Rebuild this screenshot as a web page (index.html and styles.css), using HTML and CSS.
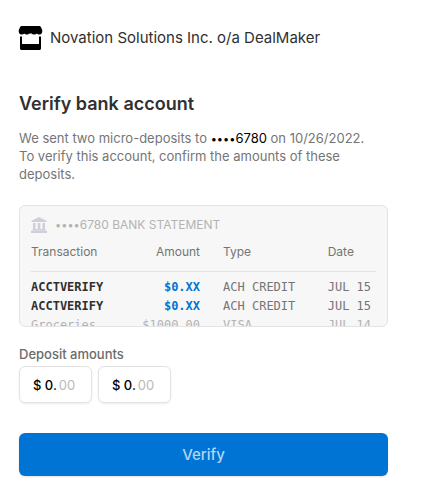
FILE: index.html
```html
<!DOCTYPE html>
<html lang="en">
<head>
  <meta charset="UTF-8">
  <meta name="viewport" content="width=device-width, initial-scale=1.0">
  <title>Verify bank account</title>
  <link rel="stylesheet" href="styles.css">
</head>
<body>

  <!-- Merchant -->
  <header class="merchant">
    <svg class="merchant-icon" viewBox="0 0 24 24" aria-hidden="true">
      <path d="M3 0h17c1 0 1.600.4 2 1.200L23.200 4c.5 2.500-.7 4.600-2.700 4.600-1.200 0-2-.4-2.600-1-.6.6-1.400 1-2.400 1-1.300 0-2.300-.3-2.900-1L11.500 7.400l-1.100.2c-.6.7-1.600 1-2.900 1-1 0-1.800-.4-2.400-1-.6.6-1.400 1-2.600 1C.5 8.600-.7 6.500-.2 4L1 1.200C1.400.4 2 0 3 0z"/>
      <path d="M1 10.500h2V18h17v-7.500h2v12c0 .8-.7 1.500-1.500 1.500h-18C1.700 24 1 23.300 1 22.500z"/>
    </svg>
    <span class="merchant-name">Novation Solutions Inc. o/a DealMaker</span>
  </header>

  <main>
    <h1>Verify bank account</h1>
    <p class="intro">We sent two micro-deposits to <span class="account"><span class="dots">••••</span>6780</span> on 10/26/2022. To verify this account, confirm the amounts of these deposits.</p>

    <!-- Sample statement -->
    <section class="statement">
      <div class="statement-title">
        <svg class="bank-icon" viewBox="0 0 16 16" aria-hidden="true">
          <path d="M8 0l7.500 3.800V5H.5V3.800zM2 6h2.500v6H2zM6.700 6h2.600v6H6.700zM11.500 6H14v6h-2.500zM1.500 12h13v1.500h-13zM0 13.800h16V16H0z"/>
        </svg>
        <span><span class="dots">••••</span>6780 BANK STATEMENT</span>
      </div>
      <table>
        <thead>
          <tr>
            <th class="col-name">Transaction</th>
            <th class="col-amount">Amount</th>
            <th class="col-type">Type</th>
            <th class="col-date">Date</th>
          </tr>
        </thead>
        <tbody>
          <tr>
            <td class="name">ACCTVERIFY</td>
            <td class="amount">$0.XX</td>
            <td>ACH CREDIT</td>
            <td>JUL 15</td>
          </tr>
          <tr>
            <td class="name">ACCTVERIFY</td>
            <td class="amount">$0.XX</td>
            <td>ACH CREDIT</td>
            <td>JUL 15</td>
          </tr>
          <tr class="faded">
            <td>Groceries</td>
            <td>$1000.00</td>
            <td>VISA</td>
            <td>JUL 14</td>
          </tr>
        </tbody>
      </table>
    </section>

    <!-- Deposit form -->
    <form>
      <fieldset>
        <legend>Deposit amounts</legend>
        <div class="amounts">
          <label class="amount-box">
            <span>$ 0.</span>
            <input type="text" inputmode="numeric" maxlength="2" placeholder="00" aria-label="First deposit, cents">
          </label>
          <label class="amount-box">
            <span>$ 0.</span>
            <input type="text" inputmode="numeric" maxlength="2" placeholder="00" aria-label="Second deposit, cents">
          </label>
        </div>
      </fieldset>
      <button type="submit" class="verify">Verify</button>
    </form>
  </main>

</body>
</html>
```

FILE: styles.css
```css
/* Base styling */
* {
  margin: 0;
  padding: 0;
  box-sizing: border-box;
}

body {
  padding: 24px 42px 16px 19px;
  background-color: #fff;
  color: #303030;
  font-family: Inter, 'Liberation Sans', sans-serif;
  font-size: 13px;
  line-height: 18px;
}

/* Merchant */
.merchant {
  display: flex;
  align-items: center;
  gap: 7px;
  height: 28px;
}

.merchant-icon {
  width: 24px;
  height: 24px;
  overflow: visible;
  fill: #000;
}

.merchant-name {
  font-size: 15px;
}

h1 {
  margin-top: 40px;
  font-size: 18px;
  font-weight: 600;
  line-height: 24px;
}

.intro {
  margin-top: 13px;
  padding-right: 14px;
  color: #757575;
}

.account {
  color: #000;
}

.dots {
  font-size: 11px;
  line-height: 1;
}

/* Statement */
.statement {
  height: 122px;
  margin-top: 22px;
  padding: 10px 11px 0;
  overflow: hidden;
  border: 1px solid #e3e3e3;
  border-radius: 6px;
  background-color: #f7f7f7;
}

.statement-title {
  display: flex;
  align-items: center;
  gap: 8px;
  color: #b3b3b3;
  font-size: 12px;
}

.bank-icon {
  width: 16px;
  height: 16px;
  fill: #cfcfd8;
}

table {
  width: 100%;
  table-layout: fixed;
  border-collapse: collapse;
}

th {
  height: 37px;
  border-bottom: 1px solid #e3e3e3;
  color: #757575;
  font-size: 12px;
  font-weight: 400;
  text-align: left;
}

.col-name {
  width: 27%;
}

.col-amount {
  width: 22%;
}

.col-date {
  width: 14%;
}

td {
  height: 19px;
  color: #757575;
  font-family: 'DejaVu Sans Mono', monospace;
  font-size: 12px;
  white-space: nowrap;
}

th:nth-child(2),
td:nth-child(2) {
  text-align: right;
}

th:nth-child(3),
td:nth-child(3) {
  padding-left: 23px;
}

tbody tr:first-child td {
  height: 25px;
  padding-top: 6px;
}

td.name {
  color: #303030;
  font-weight: 700;
}

td.amount {
  color: #0074d4;
  font-weight: 700;
}

.faded td {
  color: #b3b3b3;
}

/* Deposit form */
fieldset {
  margin-top: 18px;
  border: none;
}

legend {
  color: #6b6b6b;
  font-weight: 500;
}

.amounts {
  display: flex;
  gap: 6px;
  margin-top: 3px;
}

.amount-box {
  display: flex;
  align-items: center;
  gap: 2px;
  width: 73px;
  height: 37px;
  padding-left: 13px;
  border: 1px solid #e3e3e3;
  border-radius: 6px;
  box-shadow: 0 1px 2px rgba(0, 0, 0, 0.08);
  color: #000;
  font-weight: 500;
}

.amount-box input {
  width: 24px;
  border: none;
  outline: none;
  background: none;
  color: #303030;
  font: inherit;
  font-weight: 400;
}

.amount-box input::placeholder {
  color: #b9b9b9;
}

.verify {
  display: block;
  width: 100%;
  height: 43px;
  margin-top: 30px;
  border: none;
  border-radius: 6px;
  box-shadow: 0 1px 2px rgba(0, 0, 0, 0.12);
  background-color: #0074d4;
  color: #b3d5f2;
  font-family: inherit;
  font-size: 15px;
  font-weight: 500;
  cursor: pointer;
}
```
